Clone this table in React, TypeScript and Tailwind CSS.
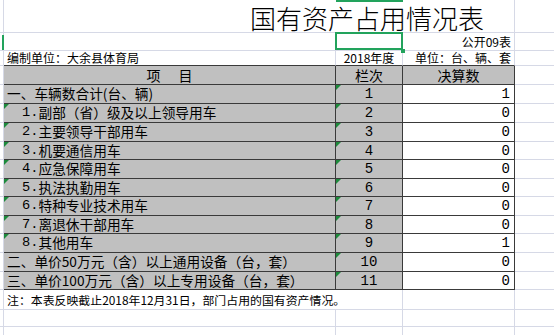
import React from 'react';

const GRID = 'grid grid-cols-[4px_332px_67px_112px_1fr]';
const CJK = "font-['Noto_Sans_CJK_SC','Noto_Sans',sans-serif]";
const MONO = "font-['Liberation_Mono','Noto_Sans_CJK_SC',monospace]";

interface Row {
  prefix?: string;
  label: string;
  no: string;
  val: string;
  mark?: boolean;
  h: string;
}

const rows: Row[] = [
  { label: '一、车辆数合计(台、辆)', no: '1', val: '1', h: 'h-[19px]' },
  { prefix: '1.', label: '副部（省）级及以上领导用车', no: '2', val: '0', mark: true, h: 'h-[19px]' },
  { prefix: '2.', label: '主要领导干部用车', no: '3', val: '0', mark: true, h: 'h-[19px]' },
  { prefix: '3.', label: '机要通信用车', no: '4', val: '0', mark: true, h: 'h-[18px]' },
  { prefix: '4.', label: '应急保障用车', no: '5', val: '0', mark: true, h: 'h-[19px]' },
  { prefix: '5.', label: '执法执勤用车', no: '6', val: '0', mark: true, h: 'h-[18px]' },
  { prefix: '6.', label: '特种专业技术用车', no: '7', val: '0', mark: true, h: 'h-[19px]' },
  { prefix: '7.', label: '离退休干部用车', no: '8', val: '0', mark: true, h: 'h-[18px]' },
  { prefix: '8.', label: '其他用车', no: '9', val: '1', mark: true, h: 'h-[19px]' },
  { label: '二、单价50万元（含）以上通用设备（台，套）', no: '10', val: '0', h: 'h-[19px]' },
  { label: '三、单价100万元（含）以上专用设备（台，套）', no: '11', val: '0', h: 'h-[18px]' },
];

function Mark() {
  return (
    <span className="absolute left-0 top-0 h-0 w-0 border-t-[5px] border-r-[5px] border-t-[#1d8a3c] border-r-transparent" />
  );
}

const grid = 'border-b border-r border-[#d6d9e6]';
const gridB = 'border-b border-[#d6d9e6]';

export default function App() {
  return (
    <div className={`relative h-[335px] w-[554px] overflow-hidden bg-white text-black ${CJK}`}>
      {/* title */}
      <div className={`${GRID} h-[33px]`}>
        <div className={grid} />
        <div className={`col-span-3 ${grid} relative`}>
          <span className="absolute left-[332px] top-0 h-[2px] w-[67px] bg-[#22a35c]" />
          <div className="pl-[246px] pt-[5px] text-[26px] font-light leading-none whitespace-nowrap">国有资产占用情况表</div>
        </div>
        <div className={gridB} />
      </div>

      {/* row 1 */}
      <div className={`${GRID} h-[18px]`}>
        <div className={`${grid} relative`}>
          <span className="absolute left-[2px] top-[2px] h-[15px] w-[2px] bg-[#22a35c]" />
        </div>
        <div className={grid} />
        <div className={`${grid} relative`}>
          <div className="absolute -left-[1px] -top-[1px] h-[18px] w-[68px] border-2 border-[#22a35c]" />
          <span className="absolute -bottom-[3px] -right-[3px] h-[4px] w-[4px] bg-[#22a35c]" />
        </div>
        <div className={`${grid} flex items-end justify-end pb-[2px] pr-[3px] text-[12px] leading-none`}>公开09表</div>
        <div className={gridB} />
      </div>

      {/* row 2 */}
      <div className={`${GRID} h-[15px]`}>
        <div className={grid} />
        <div className="flex items-center border-b border-r border-b-[#3a3a3a] border-r-[#d6d9e6] pl-[3px] text-[12px] leading-none whitespace-nowrap">
          编制单位：大余县体育局
        </div>
        <div className="flex items-center justify-center border-b border-r border-b-[#3a3a3a] border-r-[#d6d9e6] text-[12px] leading-none">
          2018年度
        </div>
        <div className="flex items-center justify-end border-b border-r border-b-[#3a3a3a] border-r-[#d6d9e6] pr-[3px] text-[12px] leading-none whitespace-nowrap">
          单位：台、辆、套
        </div>
        <div className={gridB} />
      </div>

      {/* header */}
      <div className={`${GRID} h-[19px]`}>
        <div className={grid} />
        <div className="flex items-center justify-center gap-[18px] border-b border-r border-[#3a3a3a] bg-[#c0c0c0] text-[14px] leading-none">
          <span>项</span>
          <span>目</span>
        </div>
        <div className="flex items-center justify-center border-b border-r border-[#3a3a3a] bg-[#c0c0c0] text-[14px] leading-none">
          栏次
        </div>
        <div className="flex items-center justify-center border-b border-r border-[#3a3a3a] bg-[#c0c0c0] text-[14px] leading-none">
          决算数
        </div>
        <div className={gridB} />
      </div>

      {rows.map((r) => (
        <div key={r.no} className={`${GRID} ${r.h}`}>
          <div className={grid} />
          <div
            className={`relative flex items-center border-b border-r border-[#3a3a3a] bg-[#c0c0c0] text-[13.7px] leading-none whitespace-nowrap ${
              r.prefix ? 'pl-[18px]' : 'pl-[3px]'
            }`}
          >
            {r.mark && <Mark />}
            {r.prefix && <span className={MONO}>{r.prefix}</span>}
            <span>{r.label}</span>
          </div>
          <div className={`relative flex items-center justify-center border-b border-r border-[#3a3a3a] bg-[#c0c0c0] text-[14px] leading-none ${MONO}`}>
            <Mark />
            {r.no}
          </div>
          <div className={`flex items-center justify-end border-b border-r border-[#3a3a3a] bg-white pr-[4px] text-[14px] leading-none ${MONO}`}>
            {r.val}
          </div>
          <div className={gridB} />
        </div>
      ))}

      {/* footer */}
      <div className={`${GRID} h-[20px]`}>
        <div className={grid} />
        <div className={`col-span-2 ${grid} flex items-center pl-[3px] text-[11.9px] leading-none whitespace-nowrap`}>
          注：本表反映截止2018年12月31日，部门占用的国有资产情况。
        </div>
        <div className={grid} />
        <div className={gridB} />
      </div>

      <div className={`${GRID} h-[17px]`}>
        <div className={grid} />
        <div className={grid} />
        <div className={grid} />
        <div className={grid} />
        <div className={gridB} />
      </div>
      <div className={`${GRID} h-[17px]`}>
        <div className={grid} />
        <div className={grid} />
        <div className={grid} />
        <div className={grid} />
        <div className={gridB} />
      </div>
    </div>
  );
}
